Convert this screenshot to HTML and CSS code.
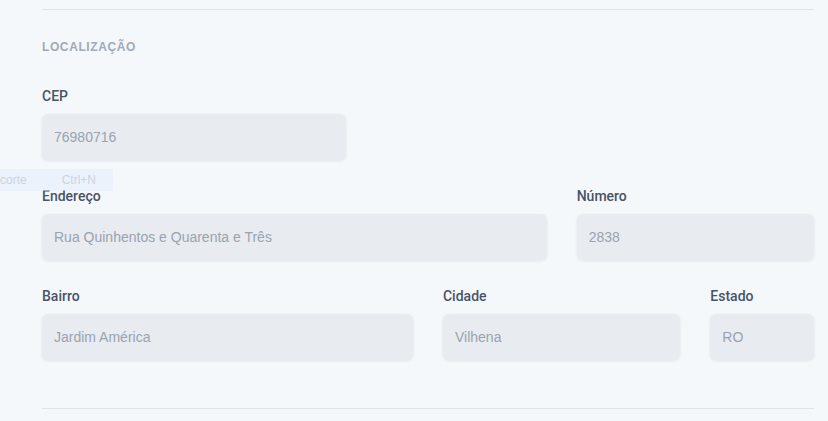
FILE: index.html
```html
<!DOCTYPE html>
<html lang="pt-BR">
<head>
<meta charset="utf-8">
<link rel="stylesheet" href="styles.css">
</head>
<body>
<div class="page">
  <section class="section">
    <h2 class="section-title">LOCALIZAÇÃO</h2>
    <div class="grid">
      <div class="field span-5">
        <label class="label">CEP</label>
        <div class="input">76980716</div>
      </div>
      <div class="break"></div>
      <div class="field span-8">
        <label class="label">Endereço</label>
        <div class="input">Rua Quinhentos e Quarenta e Três</div>
      </div>
      <div class="field span-4">
        <label class="label">Número</label>
        <div class="input">2838</div>
      </div>
      <div class="field span-6">
        <label class="label">Bairro</label>
        <div class="input">Jardim América</div>
      </div>
      <div class="field span-4">
        <label class="label">Cidade</label>
        <div class="input">Vilhena</div>
      </div>
      <div class="field span-2">
        <label class="label">Estado</label>
        <div class="input">RO</div>
      </div>
    </div>
  </section>
  <div class="divider"></div>
</div>
<div class="ghost-menu"><span>corte</span><span>Ctrl+N</span></div>
</body>
</html>
```
FILE: styles.css
```css
html, body {
  margin: 0;
  padding: 0;
  background: #f5f8fb;
  font-family: "Liberation Sans", Arial, sans-serif;
}
.page {
  padding: 9px 14px 0 42px;
}
.section {
  border-top: 1px solid #dfe4ea;
  padding-top: 29px;
}
.section-title {
  margin: 0;
  font-size: 12px;
  line-height: 16px;
  font-weight: 700;
  letter-spacing: 0.6px;
  color: #a0aab8;
}
.grid {
  display: grid;
  grid-template-columns: repeat(12, 1fr);
  column-gap: 30px;
  row-gap: 27px;
  margin-top: 32px;
}
.break {
  grid-column: span 7;
}
.field {
  display: flex;
  flex-direction: column;
  gap: 9px;
}
.span-2 { grid-column: span 2; }
.span-4 { grid-column: span 4; }
.span-5 { grid-column: span 5; }
.span-6 { grid-column: span 6; }
.span-8 { grid-column: span 8; }
.label {
  font-family: Roboto, "Liberation Sans", Arial, sans-serif;
  font-size: 14px;
  line-height: 18px;
  font-weight: 500;
  color: #4a5366;
}
.input {
  height: 46px;
  box-sizing: border-box;
  display: flex;
  align-items: center;
  padding: 0 12px;
  border-radius: 6px;
  background: #e8ebef;
  box-shadow: 0 1px 3px rgba(30, 40, 60, 0.09);
  font-size: 14px;
  color: #9aa3b0;
}
.divider {
  margin-top: 48px;
  border-top: 1px solid #dfe4ea;
}
.ghost-menu {
  position: absolute;
  left: 0;
  top: 169px;
  width: 113px;
  height: 22px;
  display: flex;
  align-items: center;
  gap: 35px;
  background: rgba(225, 236, 252, 0.55);
  font-size: 12px;
  color: #cdd4dc;
}
```
